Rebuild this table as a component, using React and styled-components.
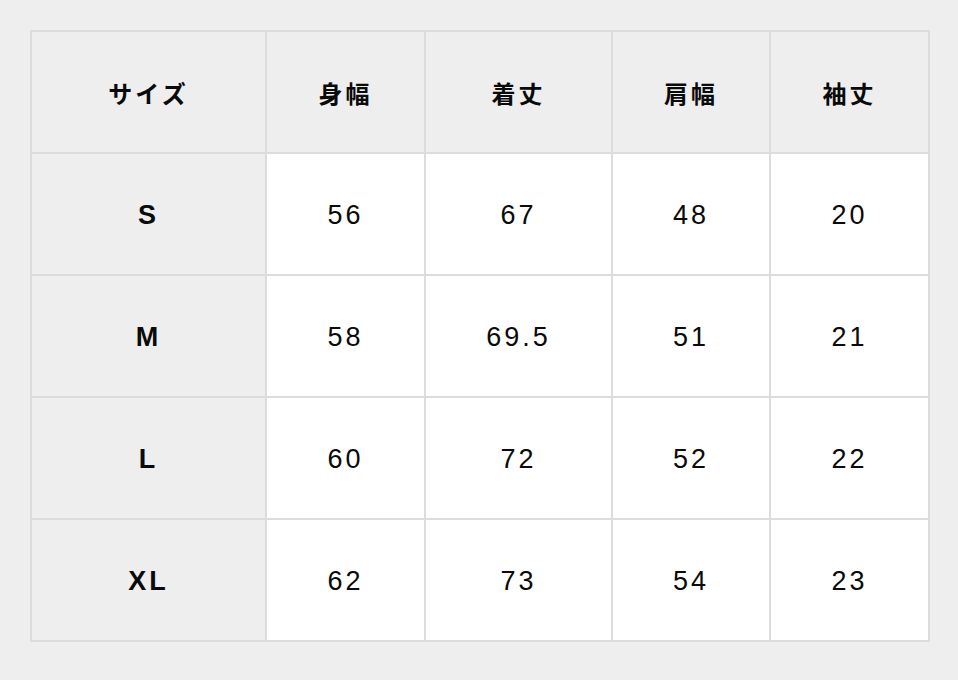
import React from 'react'
import styled, {createGlobalStyle} from 'styled-components'

const GlobalStyle = createGlobalStyle`
body {
    margin: 0;
    background: #eeeeee;
    font-family: "Liberation Sans", "Noto Sans CJK JP", sans-serif;
}
`

const Page = styled.div`
padding: 30px;
`

const Table = styled.div`
display: grid;
grid-template-columns: 233px 157px 185px 156px 157px;
grid-auto-rows: 120px;
gap: 2px;
padding: 2px;
width: 900px;
box-sizing: border-box;
background: #dcdcdc;
`

const Cell = styled.div`
display: flex;
align-items: center;
justify-content: center;
background: ${props => props.head ? '#eeeeee' : '#ffffff'};
color: #0a0a0a;
font-size: ${props => props.jp ? '24px' : '27px'};
font-weight: ${props => props.head ? 700 : 400};
letter-spacing: 3px;
padding-top: ${props => props.jp ? '0' : '3px'};
font-family: ${props => props.jp
    ? '"Noto Sans CJK JP", sans-serif'
    : '"Liberation Sans", Arial, sans-serif'};
`

const headers = ['サイズ', '身幅', '着丈', '肩幅', '袖丈']

const rows = [
    ['S', '56', '67', '48', '20'],
    ['M', '58', '69.5', '51', '21'],
    ['L', '60', '72', '52', '22'],
    ['XL', '62', '73', '54', '23']
]

const App = () => (
    <Page>
        <GlobalStyle/>
        <Table>
            {headers.map(h => <Cell key={h} head jp>{h}</Cell>)}
            {rows.map(row => row.map((val, i) => (
                <Cell key={row[0] + i} head={i === 0}>{val}</Cell>
            )))}
        </Table>
    </Page>
)

export default App
